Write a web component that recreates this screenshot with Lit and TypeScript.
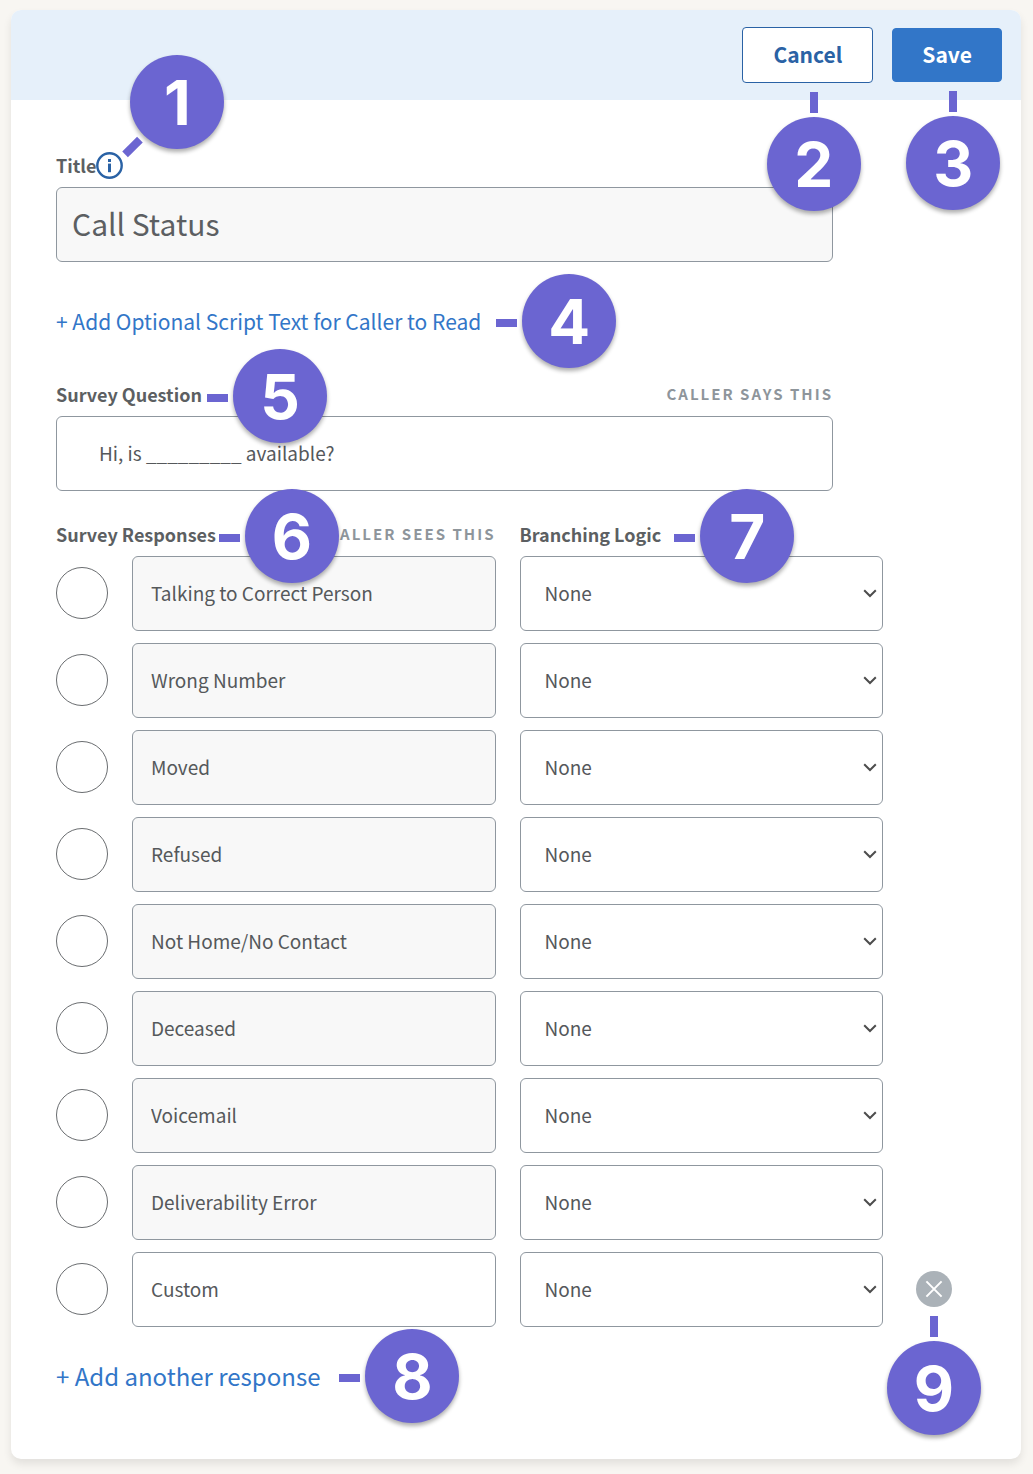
import { LitElement, html, css, svg, nothing } from "lit";
import { customElement, property, state } from "lit/decorators.js";

type Direction = "right" | "below" | "diagonal";

interface SurveyResponse {
  text: string;
  custom: boolean;
}

@customElement("step-marker")
class StepMarker extends LitElement {
  @property({ type: Number }) step = 1;
  @property({ reflect: true }) direction: Direction = "right";

  static styles = css`
    :host {
      position: absolute;
      z-index: 2;
      display: flex;
      align-items: center;
      pointer-events: none;
    }
    :host([direction="right"]) {
      left: 100%;
      top: calc(50% + var(--drop, 0px));
      gap: 5px;
      padding-left: var(--reach, 4px);
      transform: translateY(-50%);
    }
    :host([direction="below"]) {
      flex-direction: column;
      left: 50%;
      top: 100%;
      gap: 4px;
      padding-top: 9px;
      margin-left: var(--shift, 0);
      transform: translateX(-50%);
    }
    :host([direction="diagonal"]) {
      left: 100%;
      bottom: 100%;
      margin-left: 7px;
      margin-bottom: 3px;
    }
    .line {
      flex: none;
      background: #6b65d1;
      width: 21px;
      height: 8px;
    }
    .line.right {
      margin-top: 4px;
    }
    .line.below {
      width: 8px;
      height: 21px;
    }
    .line.diagonal {
      position: absolute;
      left: -8px;
      bottom: -2px;
      transform: rotate(-45deg);
    }
    .disc {
      flex: none;
      display: flex;
      align-items: center;
      justify-content: center;
      width: 94px;
      height: 94px;
      padding-top: 2px;
      box-sizing: border-box;
      border-radius: 50%;
      background: #6b65d1;
      box-shadow: 0 3px 4px rgba(0, 0, 0, 0.32);
      color: #fff;
      font: 700 62px/92px Inter, "Liberation Sans", sans-serif;
    }
  `;

  render() {
    return html`<span class="line ${this.direction}"></span><span class="disc">${this.step}</span>`;
  }
}

const infoIcon = svg`
  <svg class="info" viewBox="0 0 27 27" aria-hidden="true">
    <circle cx="13.5" cy="13.5" r="12.2" fill="#fff" stroke="#2a62a5" stroke-width="2.4" />
    <rect x="12" y="7" width="3" height="3" fill="#2a62a5" />
    <rect x="12" y="11.6" width="3" height="8.6" fill="#2a62a5" />
  </svg>`;

const chevronIcon = svg`
  <svg class="chevron" viewBox="0 0 14 9" aria-hidden="true">
    <path d="M1.2 1.2 7 7 12.8 1.2" fill="none" stroke="#4d4d4d" stroke-width="2" />
  </svg>`;

const removeIcon = svg`
  <svg class="cross" viewBox="0 0 36 36" aria-hidden="true">
    <path d="M10.4 10.4 25.6 25.6M25.6 10.4 10.4 25.6" fill="none" stroke="#fff" stroke-width="2" />
  </svg>`;

@customElement("app-root")
class AppRoot extends LitElement {
  @state() private responses: SurveyResponse[] = [
    "Talking to Correct Person",
    "Wrong Number",
    "Moved",
    "Refused",
    "Not Home/No Contact",
    "Deceased",
    "Voicemail",
    "Deliverability Error",
    "Custom",
  ].map((text) => ({ text, custom: text === "Custom" }));

  static styles = css`
    :host {
      display: block;
      min-height: 100vh;
      box-sizing: border-box;
      padding: 10px 12px 15px 11px;
      background: #f8f6f2;
      color: #5c5f62;
      font-family: "Noto Sans CJK SC", "Noto Sans", sans-serif;
      font-size: 19px;
      line-height: 26px;
    }
    *,
    *::before {
      box-sizing: border-box;
    }
    .card {
      background: #fff;
      border-radius: 10px;
      box-shadow: 0 5px 8px rgba(0, 0, 0, 0.09);
    }
    .toolbar {
      display: flex;
      justify-content: flex-end;
      align-items: center;
      gap: 19px;
      padding: 17px 19px;
      background: #e6f0fa;
      border-radius: 10px 10px 0 0;
    }
    .anchor {
      position: relative;
      display: inline-flex;
      align-items: center;
    }
    .button {
      height: 56px;
      padding: 0 30px 2px;
      border: 1px solid #2a62a5;
      border-radius: 4px;
      background: #fff;
      color: #2a62a5;
      font: 700 21px/32px "Noto Sans CJK SC", "Noto Sans", sans-serif;
      cursor: pointer;
    }
    .button.primary {
      height: 54px;
      padding: 0 29px 2px;
      border-color: #3276c8;
      background: #3276c8;
      color: #fff;
    }
    .toolbar .anchor {
      --shift: 6px;
    }
    .form {
      display: flex;
      flex-direction: column;
      padding: 53px 69px 64px 45px;
    }
    .field {
      display: flex;
      flex-direction: column;
      gap: 8px;
      margin-right: 119px;
    }
    .heading {
      --drop: 2px;
      display: flex;
      align-items: center;
      justify-content: space-between;
      height: 26px;
      padding-bottom: 2px;
    }
    .label {
      font-size: 18px;
      font-weight: 700;
    }
    .hint {
      color: #8e959b;
      font-size: 15px;
      font-weight: 700;
      letter-spacing: 2px;
      text-transform: uppercase;
    }
    .info {
      width: 27px;
      height: 27px;
    }
    .text {
      width: 100%;
      min-width: 0;
      height: 75px;
      padding: 0 18px 2px;
      border: 1px solid #8f979f;
      border-radius: 6px;
      background: #fff;
      color: #55585b;
      font: 400 19px/26px "Noto Sans CJK SC", "Noto Sans", sans-serif;
    }
    .text.locked {
      background: #f8f8f8;
    }
    .text.title {
      padding: 0 15px 4px;
      color: #5c5f62;
      font-size: 30px;
      line-height: 44px;
    }
    .text.question {
      padding: 0 42px 2px;
    }
    .link {
      align-self: flex-start;
      margin: 43px 0 45px;
      color: #3276c8;
      font-size: 21px;
      line-height: 32px;
      text-decoration: none;
    }
    .link.add {
      margin: 31px 0 1px;
      font-size: 24px;
      line-height: 36px;
    }
    .grid {
      display: grid;
      grid-template-columns: 76px 1fr 24px 1fr 33px 36px;
      row-gap: 12px;
      align-items: center;
    }
    .grid.headings {
      margin: 31px 0 8px;
    }
    .headings .responses {
      grid-column: 1 / 3;
    }
    .headings .branching {
      grid-column: 4;
    }
    .radio {
      appearance: none;
      width: 52px;
      height: 52px;
      margin: 0 0 2px;
      border: 1px solid #6a6d70;
      border-radius: 50%;
      background: #fff;
    }
    .radio:checked {
      background: #3276c8;
      box-shadow: inset 0 0 0 12px #fff;
    }
    .answer {
      grid-column: 2;
    }
    .picker {
      grid-column: 4;
      display: grid;
      align-items: center;
    }
    .select {
      grid-area: 1 / 1;
      appearance: none;
      padding: 0 24px 2px;
    }
    .chevron {
      grid-area: 1 / 1;
      justify-self: end;
      width: 14px;
      height: 9px;
      margin-right: 6px;
      pointer-events: none;
    }
    .remove-anchor {
      grid-column: 6;
      margin-bottom: 2px;
    }
    .remove {
      width: 36px;
      height: 36px;
      padding: 0;
      border: 0;
      border-radius: 50%;
      background: #abb2b8;
      cursor: pointer;
    }
    .cross {
      display: block;
      width: 36px;
      height: 36px;
    }
    .reach-none {
      --reach: 3px;
    }
    .reach-near {
      --reach: 5px;
    }
    .reach-mid {
      --reach: 13px;
    }
    .reach-far {
      --reach: 15px;
    }
    .reach-long {
      --reach: 19px;
    }
  `;

  private addResponse(event: Event) {
    event.preventDefault();
    this.responses = [...this.responses, { text: "", custom: true }];
  }

  private removeResponse(index: number) {
    this.responses = this.responses.filter((_, i) => i !== index);
  }

  private renderRow(response: SurveyResponse, index: number) {
    const name = response.text || "New response";
    return html`
      <input class="radio" type="radio" name="response" aria-label=${name} />
      <div class="answer">
        <input
          class="text ${response.custom ? "" : "locked"}"
          type="text"
          aria-label="Survey response ${index + 1}"
          .value=${response.text}
          ?readonly=${!response.custom}
        />
      </div>
      <div class="picker">
        <select class="text select" aria-label="Branching logic for ${name}">
          <option>None</option>
        </select>
        ${chevronIcon}
      </div>
      ${response.custom
        ? html`<div class="anchor remove-anchor">
            <button class="remove" type="button" aria-label="Remove ${name}" @click=${() => this.removeResponse(index)}>
              ${removeIcon}
            </button>
            ${index === 8 ? html`<step-marker step="9" direction="below"></step-marker>` : nothing}
          </div>`
        : html`<span class="remove-anchor"></span>`}
    `;
  }

  render() {
    return html`
      <main class="card">
        <header class="toolbar">
          <div class="anchor">
            <button class="button" type="button">Cancel</button>
            <step-marker step="2" direction="below"></step-marker>
          </div>
          <div class="anchor">
            <button class="button primary" type="button">Save</button>
            <step-marker step="3" direction="below"></step-marker>
          </div>
        </header>
        <form class="form" @submit=${(e: Event) => e.preventDefault()}>
          <div class="field">
            <div class="heading">
              <span class="anchor">
                <label class="label" for="title">Title</label>${infoIcon}
                <step-marker step="1" direction="diagonal"></step-marker>
              </span>
            </div>
            <input id="title" class="text title locked" type="text" value="Call Status" readonly />
          </div>

          <a class="link anchor reach-far" href="#script">
            + Add Optional Script Text for Caller to Read
            <step-marker step="4"></step-marker>
          </a>

          <div class="field">
            <div class="heading">
              <span class="anchor reach-near">
                <label class="label" for="question">Survey Question</label>
                <step-marker step="5"></step-marker>
              </span>
              <span class="hint">Caller says this</span>
            </div>
            <input id="question" class="text question" type="text" value="Hi, is _________ available?" />
          </div>

          <div class="grid headings">
            <div class="heading responses">
              <span class="anchor label reach-none">
                Survey Responses
                <step-marker step="6"></step-marker>
              </span>
              <span class="hint">Caller sees this</span>
            </div>
            <div class="heading branching">
              <span class="anchor label reach-mid">
                Branching Logic
                <step-marker step="7"></step-marker>
              </span>
            </div>
          </div>
          <div class="grid">${this.responses.map((r, i) => this.renderRow(r, i))}</div>

          <a class="link add anchor reach-long" href="#add" @click=${this.addResponse}>
            + Add another response
            <step-marker step="8"></step-marker>
          </a>
        </form>
      </main>
    `;
  }
}
